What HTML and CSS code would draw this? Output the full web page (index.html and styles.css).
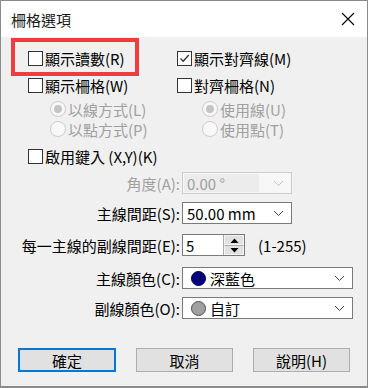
FILE: index.html
```html
<!DOCTYPE html>
<html lang="zh-Hant">
<head>
    <meta charset="UTF-8">
    <title>柵格選項</title>
    <link rel="stylesheet" href="styles.css">
</head>
<body>
    <div class="window">
        <div class="titlebar">
            <span class="title">柵格選項</span>
            <svg class="close" width="14" height="14" viewBox="0 0 14 14">
                <path d="M1 1 L13 13 M13 1 L1 13" stroke="#000" stroke-width="1.1" fill="none"/>
            </svg>
        </div>
        <div class="content">
            <div class="highlight"></div>

            <div class="options">
                <div class="column">
                    <label class="check-row"><span class="box"></span>顯示讀數(R)</label>
                    <label class="check-row"><span class="box"></span>顯示柵格(W)</label>
                    <label class="radio-row disabled"><span class="radio on"></span>以線方式(L)</label>
                    <label class="radio-row disabled"><span class="radio"></span>以點方式(P)</label>
                </div>
                <div class="column">
                    <label class="check-row"><span class="box">
                        <svg width="13" height="13" viewBox="0 0 13 13"><path d="M2.5 6.5 L5.2 9.2 L10.8 3" stroke="#333" stroke-width="1.3" fill="none"/></svg>
                    </span>顯示對齊線(M)</label>
                    <label class="check-row"><span class="box"></span>對齊柵格(N)</label>
                    <label class="radio-row disabled"><span class="radio on"></span>使用線(U)</label>
                    <label class="radio-row disabled"><span class="radio"></span>使用點(T)</label>
                </div>
            </div>

            <label class="check-row typing"><span class="box"></span>啟用鍵入 (X,Y)(K)</label>

            <div class="form">
                <div class="form-row row-angle">
                    <span class="form-label disabled">角度(A):</span>
                    <div class="combo combo-short combo-disabled">
                        <span class="combo-text">0.00 °</span>
                        <svg class="chevron" width="11" height="7" viewBox="0 0 11 7"><path d="M1 1 L5.5 5.5 L10 1" stroke="#c0c0c0" fill="none"/></svg>
                    </div>
                </div>
                <div class="form-row row-spacing">
                    <span class="form-label">主線間距(S):</span>
                    <div class="combo combo-short">
                        <span class="combo-text">50.00 mm</span>
                        <svg class="chevron" width="11" height="7" viewBox="0 0 11 7"><path d="M1 1 L5.5 5.5 L10 1" stroke="#444" fill="none"/></svg>
                    </div>
                </div>
                <div class="form-row row-spin">
                    <span class="form-label">每一主線的副線間距(E):</span>
                    <div class="spin">
                        <span class="spin-text">5</span>
                        <div class="spin-buttons">
                            <span class="spin-btn"><svg width="9" height="5" viewBox="0 0 9 5"><path d="M0.5 5 L4.5 0.5 L8.5 5 Z" fill="#000"/></svg></span>
                            <span class="spin-btn"><svg width="9" height="5" viewBox="0 0 9 5"><path d="M0.5 0 L4.5 4.5 L8.5 0 Z" fill="#000"/></svg></span>
                        </div>
                    </div>
                    <span class="range">(1-255)</span>
                </div>
                <div class="form-row row-main-color">
                    <span class="form-label">主線顏色(C):</span>
                    <div class="combo combo-long">
                        <span class="swatch navy"></span>
                        <span class="combo-text">深藍色</span>
                        <svg class="chevron" width="11" height="7" viewBox="0 0 11 7"><path d="M1 1 L5.5 5.5 L10 1" stroke="#444" fill="none"/></svg>
                    </div>
                </div>
                <div class="form-row row-sub-color">
                    <span class="form-label">副線顏色(O):</span>
                    <div class="combo combo-long">
                        <span class="swatch gray"></span>
                        <span class="combo-text">自訂</span>
                        <svg class="chevron" width="11" height="7" viewBox="0 0 11 7"><path d="M1 1 L5.5 5.5 L10 1" stroke="#444" fill="none"/></svg>
                    </div>
                </div>
            </div>

            <div class="buttons">
                <button class="btn btn-default">確定</button>
                <button class="btn">取消</button>
                <button class="btn">說明(H)</button>
            </div>
        </div>
    </div>
</body>
</html>
```

FILE: styles.css
```css
* {
    margin: 0;
    padding: 0;
    box-sizing: border-box;
}

body {
    font-family: "Noto Sans CJK TC", "Noto Sans", sans-serif;
    font-size: 15px;
    color: #000;
    background-color: #fff;
}

.window {
    width: 368px;
    height: 388px;
    border: 1px solid #8a8a8a;
    border-bottom-width: 2px;
    display: flex;
    flex-direction: column;
    background-color: #f0f0f0;
}

.titlebar {
    height: 36px;
    background-color: #fff;
    display: flex;
    justify-content: space-between;
    align-items: center;
    padding: 0 12px 0 10px;
}

.title {
    font-size: 15px;
    line-height: 1;
    color: #1a1a1a;
}

.content {
    position: relative;
    flex: 1;
    padding-left: 27px;
}

.highlight {
    position: absolute;
    left: 10px;
    top: 1px;
    width: 128px;
    height: 38px;
    border: 4px solid #f03c3c;
}

.options {
    display: flex;
    padding-top: 8px;
}

.column {
    display: flex;
    flex-direction: column;
}

.column:first-child {
    width: 149px;
}

.check-row {
    height: 27px;
    display: flex;
    align-items: center;
    gap: 2px;
    line-height: 1;
    white-space: nowrap;
}

.box {
    width: 15px;
    height: 15px;
    border: 1px solid #333;
    background-color: #fff;
    display: flex;
    align-items: center;
    justify-content: center;
}

.radio-row {
    height: 20px;
    display: flex;
    align-items: center;
    gap: 2px;
    padding-left: 22px;
    line-height: 1;
    white-space: nowrap;
}

.column:last-child .radio-row {
    padding-left: 25px;
}

.radio {
    width: 16px;
    height: 16px;
    border-radius: 50%;
    border: 1px solid #cccccc;
    background-color: #f8f8f8;
    display: flex;
    align-items: center;
    justify-content: center;
}

.radio.on::after {
    content: "";
    width: 8px;
    height: 8px;
    border-radius: 50%;
    background-color: #c4c4c4;
}

.disabled {
    color: #a0a0a0;
}

.typing {
    margin-top: 4px;
    height: 26px;
}

.form {
    display: flex;
    flex-direction: column;
}

.form-row {
    display: flex;
    align-items: center;
    height: 22px;
    margin-left: -27px;
}

.row-angle {
    margin-top: 3px;
}

.row-spacing {
    margin-top: 8px;
}

.row-spin {
    margin-top: 10px;
}

.row-main-color {
    margin-top: 11px;
}

.row-sub-color {
    margin-top: 8px;
}

.form-label {
    width: 181px;
    text-align: right;
    padding-right: 2px;
    line-height: 1;
    white-space: nowrap;
}

.combo {
    height: 22px;
    border: 1px solid #7a7a7a;
    background-color: #fff;
    display: flex;
    align-items: center;
    padding-left: 4px;
    line-height: 1;
}

.combo-short {
    width: 110px;
}

.combo-long {
    width: 171px;
    padding-left: 8px;
}

.combo-text {
    flex: 1;
    white-space: nowrap;
}

.chevron {
    margin-right: 7px;
}

.combo-disabled {
    border-color: #cccccc;
    background-color: #f7f7f7;
    color: #a0a0a0;
}

.combo-disabled .combo-text {
    background-color: #ececec;
    align-self: stretch;
    display: flex;
    align-items: center;
    margin: 1px 14px 1px -3px;
    padding-left: 3px;
}

.spin {
    width: 63px;
    height: 22px;
    border: 1px solid #7a7a7a;
    background-color: #fff;
    display: flex;
    line-height: 1;
}

.spin-text {
    flex: 1;
    display: flex;
    align-items: center;
    padding-left: 3px;
}

.spin-buttons {
    width: 21px;
    display: flex;
    flex-direction: column;
    border-left: 1px solid #adadad;
}

.spin-btn {
    flex: 1;
    background-color: #e1e1e1;
    border: 1px solid #f4f4f4;
    display: flex;
    align-items: center;
    justify-content: center;
}

.spin-btn + .spin-btn {
    border-top: 1px solid #adadad;
}

.range {
    margin-left: 13px;
    line-height: 1;
}

.swatch {
    width: 15px;
    height: 15px;
    border-radius: 50%;
    margin-right: 4px;
}

.swatch.navy {
    background-color: #000080;
    border: 1px solid #000040;
}

.swatch.gray {
    background-color: #a0a0a0;
    border: 1px solid #505050;
}

.buttons {
    display: flex;
    gap: 20px;
    margin: 29px 0 0 -10px;
}

.btn {
    width: 97px;
    height: 24px;
    border: 1px solid #adadad;
    background-color: #e1e1e1;
    font-family: inherit;
    font-size: 15px;
    line-height: 1;
    color: #000;
}

.btn-default {
    width: 98px;
    border: 2px solid #0078d7;
}
```
